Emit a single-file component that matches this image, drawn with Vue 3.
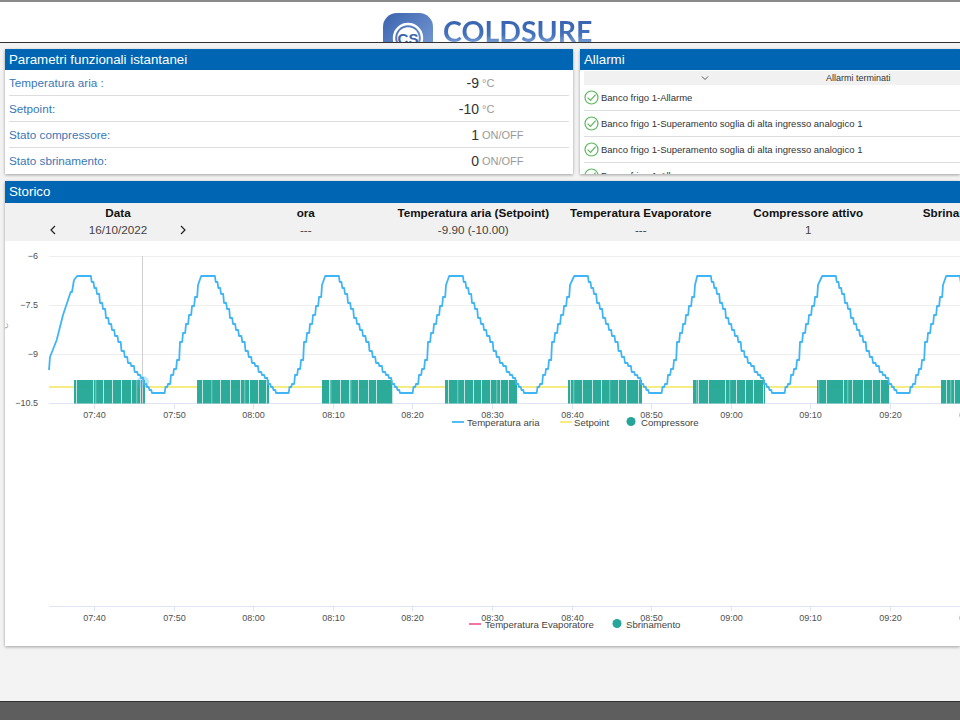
<script setup>
/**
 * Coldsure dashboard: live parameters, alarms and history charts
 */
import { computed } from 'vue'

const params = [
  { label: 'Temperatura aria :', value: '-9', unit: '°C' },
  { label: 'Setpoint:', value: '-10', unit: '°C' },
  { label: 'Stato compressore:', value: '1', unit: 'ON/OFF' },
  { label: 'Stato sbrinamento:', value: '0', unit: 'ON/OFF' },
]

const alarms = [
  'Banco frigo 1-Allarme',
  'Banco frigo 1-Superamento soglia di alta ingresso analogico 1',
  'Banco frigo 1-Superamento soglia di alta ingresso analogico 1',
  'Banco frigo 1-Allarme',
]

const columns = [
  { title: 'ora', value: '---' },
  { title: 'Temperatura aria (Setpoint)', value: '-9.90 (-10.00)' },
  { title: 'Temperatura Evaporatore', value: '---' },
  { title: 'Compressore attivo', value: '1' },
  { title: 'Sbrinamento attivo', value: '0' },
]

// chart coordinates are page pixels, the svg viewBox starts at the panel origin
const times = ['07:40', '07:50', '08:00', '08:10', '08:20', '08:30', '08:40', '08:50', '09:00', '09:10', '09:20', '09:30']
const ticks = times.map((label, i) => ({ label, x: Math.round(94 + i * 79.6) + 0.5 }))
const yTicks = [
  { label: '−6', y: 256.5 },
  { label: '−7.5', y: 305.5 },
  { label: '−9', y: 354.5 },
  { label: '−10.5', y: 403.5 },
]

const rise = [[49, 370], [50, 357], [56.7, 340], [63, 315], [70.7, 292], [72, 292], [74, 280]]
const cycle = [
  [0, 276], [11, 276], [19, 293], [25, 310], [37, 337], [50, 362], [60, 375], [69, 388], [74, 393],
  [85, 393], [90, 383], [99, 360], [102, 343], [114, 307], [120, 285], [124, 276],
]
const peaks = [78, 202, 326, 450, 575, 698, 823, 947]

const tempLine = computed(() => {
  const pts = [...rise]
  peaks.forEach((start) => {
    let prev = 276
    for (let k = 0; k < cycle.length - 1; k++) {
      const [x0, y0] = cycle[k]
      const [x1, y1] = cycle[k + 1]
      const n = Math.max(1, Math.round((x1 - x0) / 3))
      for (let s = 0; s < n; s++) {
        const t = s / n
        const x = start + x0 + (x1 - x0) * t
        const y = Math.round((y0 + (y1 - y0) * t - 276) / 3) * 3 + 276
        pts.push([x - 0.8, prev], [x, y])
        prev = y
      }
    }
  })
  return pts.map((p) => p[0].toFixed(1) + ',' + p[1].toFixed(1)).join(' ')
})

const compressor = [
  { x: 74, w: 71, gaps: [2, 19, 29, 38, 47, 57, 66], soft: [21, 62] },
  { x: 197, w: 72, gaps: [5, 23, 33, 43, 52, 61, 69], soft: [14, 47] },
  { x: 322, w: 71, gaps: [7, 18, 27, 36, 46, 54, 70], soft: [8, 28] },
  { x: 445, w: 72, gaps: [3, 19, 28, 36, 45, 55, 63], soft: [12, 51] },
  { x: 568, w: 74, gaps: [2, 14, 24, 33, 50, 58, 70], soft: [5, 41] },
  { x: 693, w: 72, gaps: [5, 15, 32, 43, 52, 60, 70], soft: [3, 36] },
  { x: 817, w: 72, gaps: [9, 26, 35, 46, 55, 63], soft: [1, 30] },
  { x: 941, w: 30, gaps: [5, 13], soft: [9] },
]
</script>

<template>
  <div class="page">
    <header class="top-bar">
      <div class="logo">
        <svg class="logo-mark" width="50" height="50" viewBox="0 0 50 50">
          <defs>
            <linearGradient id="markFill" x1="0" y1="0" x2="1" y2="1">
              <stop offset="0" stop-color="#3b62ad" />
              <stop offset="1" stop-color="#7fa3da" />
            </linearGradient>
          </defs>
          <rect width="50" height="50" rx="14" fill="url(#markFill)" />
          <circle cx="25" cy="25" r="14" fill="none" stroke="#fff" stroke-width="2.4" />
          <circle cx="25" cy="25" r="10.8" fill="#fff" />
          <text x="25" y="30.5" text-anchor="middle" class="logo-cs">CS</text>
        </svg>
        <span class="logo-text">COLDSURE</span>
      </div>
    </header>

    <main class="content">
      <div class="top-cards">
        <section class="card params">
          <h2 class="card-title">Parametri funzionali istantanei</h2>
          <div class="param-list">
            <div v-for="p in params" :key="p.label" class="param-row">
              <span class="param-label">{{ p.label }}</span>
              <span class="param-value">{{ p.value }}</span>
              <span class="param-unit">{{ p.unit }}</span>
            </div>
          </div>
        </section>

        <section class="card alarms">
          <h2 class="card-title">Allarmi</h2>
          <div class="alarm-body">
            <div class="alarm-head">
              <span class="alarm-toggle">
                <svg width="8" height="6" viewBox="0 0 8 6">
                  <path d="M1 1.5 L4 4.5 L7 1.5" fill="none" stroke="#555" stroke-width="1" />
                </svg>
              </span>
              <span class="alarm-tab">Allarmi terminati</span>
            </div>
            <div v-for="(a, i) in alarms" :key="i" class="alarm-row">
              <svg width="15" height="15" viewBox="0 0 15 15">
                <circle cx="7.5" cy="7.5" r="6.5" fill="none" stroke="#5cb85c" stroke-width="1.2" />
                <path d="M3.6 7.6 L6.5 10.4 L11.6 4.7" fill="none" stroke="#5cb85c" stroke-width="1.2" />
              </svg>
              <span>{{ a }}</span>
            </div>
          </div>
        </section>
      </div>

      <section class="card history">
        <h2 class="card-title">Storico</h2>
        <div class="summary">
          <div class="summary-col first">
            <div class="summary-title">Data</div>
            <div class="date-nav">
              <svg width="6" height="10" viewBox="0 0 6 10"><path d="M5 1 L1 5 L5 9" fill="none" stroke="#222" stroke-width="1.2" /></svg>
              <span class="summary-value">16/10/2022</span>
              <svg width="6" height="10" viewBox="0 0 6 10"><path d="M1 1 L5 5 L1 9" fill="none" stroke="#222" stroke-width="1.2" /></svg>
            </div>
          </div>
          <div v-for="c in columns" :key="c.title" class="summary-col">
            <div class="summary-title">{{ c.title }}</div>
            <div class="summary-value">{{ c.value }}</div>
          </div>
        </div>

        <svg class="chart" width="955" height="195" viewBox="5 241 955 195">
          <text transform="translate(7.5 332) rotate(-90)" class="unit-text">°C</text>
          <line v-for="t in yTicks" :key="t.label" x1="49" x2="960" :y1="t.y" :y2="t.y" class="split" />
          <text v-for="t in yTicks" :key="t.label" x="38" :y="t.y + 2.5" text-anchor="end" class="axis-text">{{ t.label }}</text>
          <line x1="49" x2="960" y1="403.5" y2="403.5" class="axis" />
          <g v-for="t in ticks" :key="t.label">
            <line :x1="t.x" :x2="t.x" y1="403.5" y2="409" class="axis" />
            <text :x="t.x" y="418" text-anchor="middle" class="axis-text">{{ t.label }}</text>
          </g>
          <line x1="49" x2="960" y1="387" y2="387" class="setpoint" />
          <g v-for="b in compressor" :key="b.x">
            <rect :x="b.x" y="380" :width="b.w" height="23.5" class="comp" />
            <rect v-for="g in b.gaps" :key="g" :x="b.x + g" y="380" width="1" height="23.5" fill="#fff" opacity="0.7" />
            <rect v-for="g in b.soft" :key="g" :x="b.x + g" y="380" width="1.4" height="23.5" fill="#fff" opacity="0.3" />
          </g>
          <line x1="142.5" x2="142.5" y1="256" y2="403.5" class="cursor" />
          <polyline :points="tempLine" class="temp" />
          <circle cx="143" cy="382" r="6" fill="#4ab8f0" opacity="0.35" />

          <line x1="452" x2="464" y1="422" y2="422" class="temp-key" />
          <text x="467" y="425.5" class="legend-text">Temperatura aria</text>
          <line x1="560" x2="572" y1="422" y2="422" class="setpoint" />
          <text x="574" y="425.5" class="legend-text">Setpoint</text>
          <circle cx="631" cy="421.5" r="4.5" fill="#26a69a" />
          <text x="641" y="425.5" class="legend-text">Compressore</text>
        </svg>

        <svg class="chart" width="955" height="210" viewBox="5 436 955 210">
          <line x1="49" x2="960" y1="606.5" y2="606.5" class="axis" />
          <g v-for="t in ticks" :key="t.label">
            <line :x1="t.x" :x2="t.x" y1="606.5" y2="611" class="axis" />
            <text :x="t.x" y="620.5" text-anchor="middle" class="axis-text">{{ t.label }}</text>
          </g>
          <line x1="469" x2="481" y1="624" y2="624" stroke="#f0447f" stroke-width="1.5" />
          <text x="485" y="627.5" class="legend-text">Temperatura Evaporatore</text>
          <circle cx="617" cy="623.5" r="4.5" fill="#26a69a" />
          <text x="626" y="627.5" class="legend-text">Sbrinamento</text>
        </svg>
      </section>
    </main>

    <footer class="bottom-bar"></footer>
  </div>
</template>

<style>
html,
body {
  margin: 0;
  overflow: hidden;
}
</style>

<style scoped>
.page {
  width: 960px;
  height: 720px;
  overflow: hidden;
  display: flex;
  flex-direction: column;
  background: #f3f3f3;
  font-family: "Liberation Sans", Arial, sans-serif;
}

.top-bar {
  flex: none;
  height: 40px;
  background: #fff;
  border-top: 2px solid #8a8a8a;
  border-bottom: 1px solid #333;
  overflow: hidden;
}

.logo {
  display: flex;
  align-items: flex-start;
  gap: 10px;
  margin: 11px 0 0 383px;
}

.logo-mark {
  flex: none;
}

.logo-cs {
  font-family: "Liberation Sans", Arial, sans-serif;
  font-size: 15px;
  font-weight: 700;
  fill: #3b62ad;
}

.logo-text {
  margin-top: -2px;
  font-family: Lato, sans-serif;
  font-size: 28.5px;
  font-weight: 700;
  line-height: 40px;
  background: linear-gradient(180deg, #2f5ba8 0%, #4472bc 60%, #b5cdea 100%);
  -webkit-background-clip: text;
  background-clip: text;
  color: transparent;
}

.content {
  flex: 1;
  padding: 6px 0 0 5px;
  display: flex;
  flex-direction: column;
  gap: 7px;
  min-height: 0;
}

.top-cards {
  display: flex;
  gap: 7px;
}

.card {
  background: #fff;
  box-shadow: 0 1px 3px rgba(0, 0, 0, 0.35);
  overflow: hidden;
}

.card-title {
  margin: 0;
  height: 21px;
  padding-left: 4px;
  background: #0066b3;
  color: #fff;
  font-size: 13.3px;
  font-weight: 400;
  line-height: 21px;
}

.params {
  width: 568px;
  height: 125px;
  flex: none;
}

.param-list {
  padding: 0 4px;
}

.param-row {
  display: grid;
  grid-template-columns: 1fr auto 87px;
  align-items: center;
  column-gap: 3px;
  height: 25px;
  border-bottom: 1px solid #ddd;
}

.param-row:last-child {
  border-bottom: none;
}

.param-label {
  color: #3a78b8;
  font-size: 11.7px;
}

.param-value {
  color: #333;
  font-size: 14px;
}

.param-unit {
  color: #999;
  font-size: 11px;
}

.alarms {
  flex: 1;
  height: 125px;
}

.alarm-body {
  padding: 1px 0 0 4px;
}

.alarm-head {
  display: flex;
  height: 14px;
  background: #f1f1f1;
  font-size: 9px;
  color: #333;
  line-height: 14px;
}

.alarm-toggle {
  width: 242px;
  text-align: center;
}

.alarm-tab {
  flex: 1;
}

.alarm-row {
  display: flex;
  align-items: center;
  gap: 2px;
  height: 25px;
  border-bottom: 1px solid #ddd;
  color: #333;
  font-size: 9.5px;
  white-space: nowrap;
}

.history {
  flex: none;
  height: 465px;
}

.history .card-title {
  height: 22px;
  line-height: 22px;
}

.summary {
  display: grid;
  grid-template-columns: 217px repeat(5, 167.5px);
  height: 38px;
  background: #f1f1f1;
  padding-top: 2px;
  box-sizing: border-box;
  white-space: nowrap;
}

.summary-col {
  text-align: center;
}

.summary-col.first {
  padding-left: 9px;
}

.summary-title {
  color: #111;
  font-size: 11.7px;
  font-weight: 700;
  line-height: 15px;
}

.summary-value {
  color: #444;
  font-size: 11.7px;
  line-height: 19px;
}

.date-nav {
  display: flex;
  align-items: center;
  justify-content: center;
  gap: 33px;
}

.chart {
  display: block;
}

.split {
  stroke: #eeeeee;
  stroke-width: 1;
}

.axis {
  stroke: #dfe4f2;
  stroke-width: 1;
}

.axis-text {
  font-size: 9px;
  fill: #4f4f4f;
  font-family: "Liberation Sans", Arial, sans-serif;
}

.unit-text {
  font-size: 8px;
  fill: #8a8f9c;
  font-family: "Liberation Sans", Arial, sans-serif;
}

.legend-text {
  font-size: 9.6px;
  fill: #444;
  font-family: "Liberation Sans", Arial, sans-serif;
}

.setpoint {
  stroke: #f6ec84;
  stroke-width: 2;
}

.comp {
  fill: #25a797;
  opacity: 0.97;
}

.cursor {
  stroke: #cfcfcf;
  stroke-width: 1;
}

.temp {
  fill: none;
  stroke: #3fb5f5;
  stroke-width: 1.8;
  stroke-linejoin: round;
}

.temp-key {
  stroke: #3fb5f5;
  stroke-width: 1.8;
}

.bottom-bar {
  flex: none;
  height: 18px;
  background: #5e5e5e;
  border-top: 1px solid #333;
}
</style>
